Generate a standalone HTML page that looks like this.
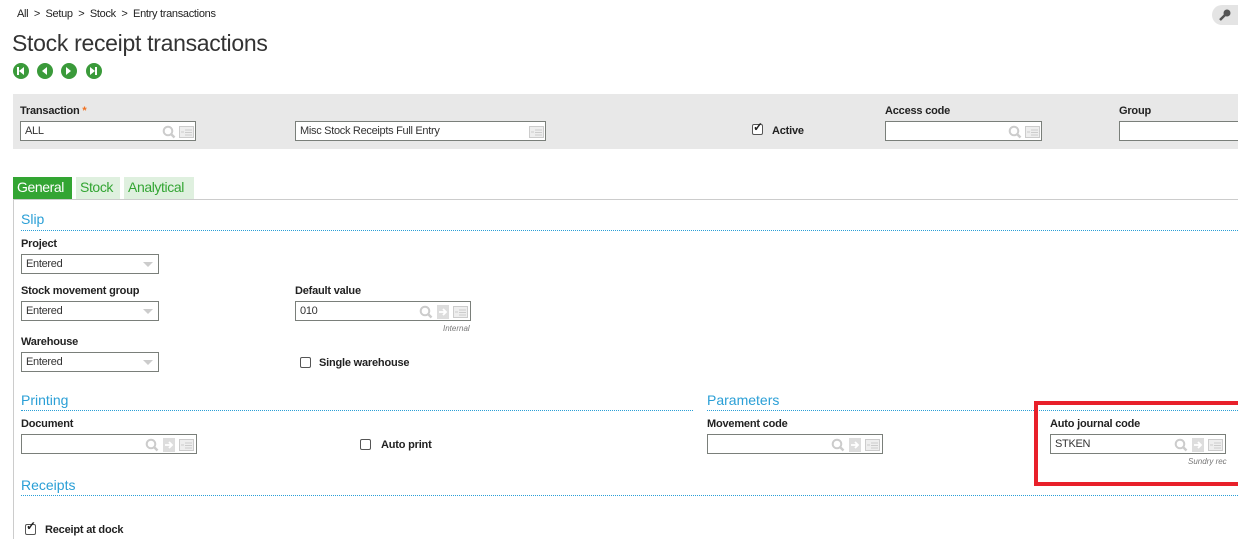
<!DOCTYPE html>
<html><head><style>
*{margin:0;padding:0;box-sizing:border-box}
body{width:1238px;height:539px;background:#fff;font-family:"Liberation Sans",sans-serif;color:#222;position:relative;overflow:hidden}
.a{position:absolute}
.lbl{position:absolute;font-size:11px;font-weight:bold;color:#222;white-space:nowrap;letter-spacing:-0.2px}
.inp{position:absolute;height:20px;border:1px solid #7a7f7a;background:#fff;font-size:11px;padding:3px 4px;color:#333;letter-spacing:-0.3px}
.h{position:absolute;font-size:14px;color:#2a9fd6}
.dl{position:absolute;height:0;border-top:1px dotted #2a9fd6}
.ic{position:absolute;top:3px}
.cb{position:absolute;width:11px;height:11px;border:1.5px solid #555;border-radius:2px;background:#fff}
.nav{position:absolute;top:63px;width:16px;height:16px;border-radius:50%;background:#3a9a3a}
.tab{position:absolute;top:177px;height:22px;font-size:14px;padding:2px 4px;letter-spacing:-0.4px}
.sm{position:absolute;font-size:8px;font-style:italic;color:#777}
.sel::after{content:"";position:absolute;right:5px;top:7px;border-left:5px solid transparent;border-right:5px solid transparent;border-top:5px solid #ccc}
</style></head><body>
<svg width="0" height="0" style="position:absolute"><defs>
<g id="q"><circle cx="6" cy="6" r="4.3" fill="none" stroke="#ccc" stroke-width="2"/><path d="M9 9 L12.5 12.5" stroke="#ccc" stroke-width="2.5"/></g>
<g id="f"><rect x="0.5" y="1.5" width="14" height="11" fill="#eee" stroke="#ccc"/><path d="M6 5h7M6 7.5h7M6 10h7M2 7h3" stroke="#ccc"/></g>
<g id="j"><rect x="0" y="0" width="12" height="14" fill="#ddd"/><path d="M2 7h6M6 4l3 3-3 3" stroke="#fff" stroke-width="1.8" fill="none"/></g>
</defs></svg>
<div class="a" style="left:17px;top:8px;font-size:11px;letter-spacing:-0.3px">All &nbsp;&gt;&nbsp; Setup &nbsp;&gt;&nbsp; Stock &nbsp;&gt;&nbsp; Entry transactions</div>
<div class="a" style="left:1212px;top:5px;width:40px;height:20px;border-radius:10px;background:#e4e4e4"></div>
<svg class="a" style="left:1218px;top:9px" width="14" height="12"><circle cx="9" cy="4" r="3.5" fill="#555"/><path d="M7 6 L2 11" stroke="#555" stroke-width="2.5"/></svg>
<div class="a" style="left:12px;top:30px;font-size:23px;color:#333;letter-spacing:-0.3px">Stock receipt transactions</div>
<div class="nav" style="left:13px"></div><div class="nav" style="left:37px"></div><div class="nav" style="left:61px"></div><div class="nav" style="left:86px"></div>
<svg class="a" style="left:13px;top:63px" width="90" height="16" fill="#fff"><rect x="4" y="4" width="2" height="8"/><path d="M11 4 L6 8 L11 12Z"/><path d="M34 4 L29 8 L34 12Z"/><path d="M53 4 L58 8 L53 12Z"/><path d="M77 4 L82 8 L77 12Z"/><rect x="82" y="4" width="2" height="8"/></svg>
<div class="a" style="left:13px;top:94px;width:1225px;height:55px;background:#e8e8e8"></div>
<div class="lbl" style="left:20px;top:105px">Transaction <span style="color:#f07020">*</span></div>
<div class="inp" style="left:20px;top:121px;width:176px">ALL<svg class="ic" style="left:141px" width="32" height="14"><use href="#q"/><use href="#f" x="17"/></svg></div>
<div class="inp" style="left:295px;top:121px;width:251px">Misc Stock Receipts Full Entry<svg class="ic" style="left:233px" width="16" height="14"><use href="#f"/></svg></div>
<div class="cb" style="left:752px;top:124px"></div><div class="a" style="left:753px;top:120px;font-size:12px;font-weight:bold">✓</div>
<div class="lbl" style="left:772px;top:125px">Active</div>
<div class="lbl" style="left:885px;top:105px">Access code</div>
<div class="inp" style="left:885px;top:121px;width:157px"><svg class="ic" style="left:122px" width="32" height="14"><use href="#q"/><use href="#f" x="17"/></svg></div>
<div class="lbl" style="left:1119px;top:105px">Group</div>
<div class="inp" style="left:1119px;top:121px;width:130px"></div>
<div class="tab" style="left:13px;width:59px;background:#33a533;color:#fff">General</div>
<div class="tab" style="left:76px;width:44px;background:#dff0df;color:#33a533">Stock</div>
<div class="tab" style="left:124px;width:70px;background:#dff0df;color:#33a533">Analytical</div>
<div class="a" style="left:13px;top:199px;width:1225px;height:1px;background:#ccc"></div>
<div class="a" style="left:13px;top:199px;width:1px;height:340px;background:#ccc"></div>
<div class="h" style="left:21px;top:211px">Slip</div><div class="dl" style="left:21px;top:230px;width:1217px"></div>
<div class="lbl" style="left:21px;top:238px">Project</div>
<div class="inp sel" style="left:21px;top:254px;width:138px">Entered</div>
<div class="lbl" style="left:21px;top:285px">Stock movement group</div>
<div class="inp sel" style="left:21px;top:301px;width:138px">Entered</div>
<div class="lbl" style="left:295px;top:285px">Default value</div>
<div class="inp" style="left:295px;top:301px;width:176px">010<svg class="ic" style="left:123px" width="50" height="14"><use href="#q"/><use href="#j" x="18"/><use href="#f" x="34"/></svg></div>
<div class="sm" style="left:443px;top:324px">Internal</div>
<div class="lbl" style="left:21px;top:336px">Warehouse</div>
<div class="inp sel" style="left:21px;top:352px;width:138px">Entered</div>
<div class="cb" style="left:300px;top:357px"></div><div class="lbl" style="left:319px;top:357px">Single warehouse</div>
<div class="h" style="left:21px;top:392px">Printing</div><div class="dl" style="left:21px;top:410px;width:672px"></div>
<div class="h" style="left:707px;top:392px">Parameters</div><div class="dl" style="left:707px;top:410px;width:531px"></div>
<div class="lbl" style="left:21px;top:418px">Document</div>
<div class="inp" style="left:21px;top:434px;width:176px"><svg class="ic" style="left:123px" width="50" height="14"><use href="#q"/><use href="#j" x="18"/><use href="#f" x="34"/></svg></div>
<div class="cb" style="left:360px;top:439px"></div><div class="lbl" style="left:381px;top:439px">Auto print</div>
<div class="lbl" style="left:707px;top:418px">Movement code</div>
<div class="inp" style="left:707px;top:434px;width:176px"><svg class="ic" style="left:123px" width="50" height="14"><use href="#q"/><use href="#j" x="18"/><use href="#f" x="34"/></svg></div>
<div class="a" style="left:1034px;top:401px;width:210px;height:85px;border:4px solid #e8202a"></div>
<div class="lbl" style="left:1050px;top:418px">Auto journal code</div>
<div class="inp" style="left:1050px;top:434px;width:176px">STKEN<svg class="ic" style="left:123px" width="50" height="14"><use href="#q"/><use href="#j" x="18"/><use href="#f" x="34"/></svg></div>
<div class="sm" style="left:1188px;top:457px">Sundry rec</div>
<div class="h" style="left:21px;top:477px">Receipts</div><div class="dl" style="left:21px;top:495px;width:1217px"></div>
<div class="cb" style="left:25px;top:524px"></div><div class="a" style="left:26px;top:519px;font-size:12px;font-weight:bold">✓</div>
<div class="lbl" style="left:45px;top:524px">Receipt at dock</div>
</body></html>
